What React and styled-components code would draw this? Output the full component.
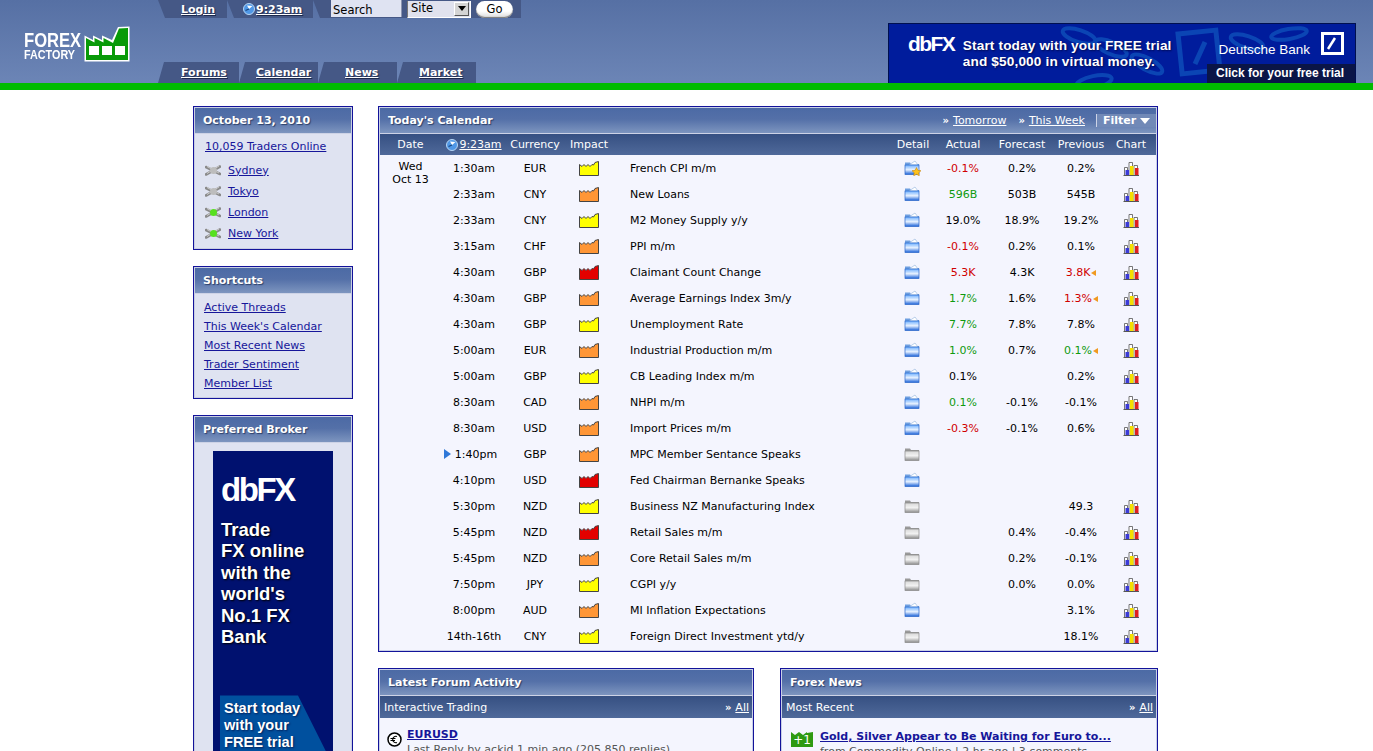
import React from "react"
import styled, { createGlobalStyle } from "styled-components"

const rows = [
  { time: "1:30am", cur: "EUR", impact: "low", event: "French CPI m/m", detail: "star", actual: "-0.1%", actualTone: "bad", forecast: "0.2%", previous: "0.2%", chart: true },
  { time: "2:33am", cur: "CNY", impact: "med", event: "New Loans", detail: "blue", actual: "596B", actualTone: "good", forecast: "503B", previous: "545B", chart: true },
  { time: "2:33am", cur: "CNY", impact: "low", event: "M2 Money Supply y/y", detail: "blue", actual: "19.0%", forecast: "18.9%", previous: "19.2%", chart: true },
  { time: "3:15am", cur: "CHF", impact: "med", event: "PPI m/m", detail: "blue", actual: "-0.1%", actualTone: "bad", forecast: "0.2%", previous: "0.1%", chart: true },
  { time: "4:30am", cur: "GBP", impact: "high", event: "Claimant Count Change", detail: "blue", actual: "5.3K", actualTone: "bad", forecast: "4.3K", previous: "3.8K", previousTone: "bad", revised: true, chart: true },
  { time: "4:30am", cur: "GBP", impact: "med", event: "Average Earnings Index 3m/y", detail: "blue", actual: "1.7%", actualTone: "good", forecast: "1.6%", previous: "1.3%", previousTone: "bad", revised: true, chart: true },
  { time: "4:30am", cur: "GBP", impact: "low", event: "Unemployment Rate", detail: "blue", actual: "7.7%", actualTone: "good", forecast: "7.8%", previous: "7.8%", chart: true },
  { time: "5:00am", cur: "EUR", impact: "med", event: "Industrial Production m/m", detail: "blue", actual: "1.0%", actualTone: "good", forecast: "0.7%", previous: "0.1%", previousTone: "good", revised: true, chart: true },
  { time: "5:00am", cur: "GBP", impact: "low", event: "CB Leading Index m/m", detail: "blue", actual: "0.1%", forecast: "", previous: "0.2%", chart: true },
  { time: "8:30am", cur: "CAD", impact: "med", event: "NHPI m/m", detail: "blue", actual: "0.1%", actualTone: "good", forecast: "-0.1%", previous: "-0.1%", chart: true },
  { time: "8:30am", cur: "USD", impact: "med", event: "Import Prices m/m", detail: "blue", actual: "-0.3%", actualTone: "bad", forecast: "-0.1%", previous: "0.6%", chart: true },
  { time: "1:40pm", cur: "GBP", impact: "med", event: "MPC Member Sentance Speaks", detail: "grey", next: true },
  { time: "4:10pm", cur: "USD", impact: "high", event: "Fed Chairman Bernanke Speaks", detail: "blue" },
  { time: "5:30pm", cur: "NZD", impact: "low", event: "Business NZ Manufacturing Index", detail: "grey", previous: "49.3", chart: true },
  { time: "5:45pm", cur: "NZD", impact: "high", event: "Retail Sales m/m", detail: "grey", forecast: "0.4%", previous: "-0.4%", chart: true },
  { time: "5:45pm", cur: "NZD", impact: "med", event: "Core Retail Sales m/m", detail: "grey", forecast: "0.2%", previous: "-0.1%", chart: true },
  { time: "7:50pm", cur: "JPY", impact: "low", event: "CGPI y/y", detail: "grey", forecast: "0.0%", previous: "0.0%", chart: true },
  { time: "8:00pm", cur: "AUD", impact: "med", event: "MI Inflation Expectations", detail: "blue", previous: "3.1%", chart: true },
  { time: "14th-16th", cur: "CNY", impact: "low", event: "Foreign Direct Investment ytd/y", detail: "grey", previous: "18.1%", chart: true },
]

const sessions = [
  { name: "Sydney", open: false },
  { name: "Tokyo", open: false },
  { name: "London", open: true },
  { name: "New York", open: true },
]

const shortcuts = ["Active Threads", "This Week's Calendar", "Most Recent News", "Trader Sentiment", "Member List"]

const impactColors = { low: "#ffff00", med: "#ff9636", high: "#e30000" }
const toneColors = { bad: "#d00000", good: "#0f9a0f" }

const GlobalStyle = createGlobalStyle`
  html, body {
    margin: 0;
    height: 100%;
    overflow: hidden;
    background: #fff;
  }
  body {
    font-family: "DejaVu Sans", Verdana, sans-serif;
    font-size: 11px;
    color: #000;
  }
`

const Header = styled.header`
  display: flex;
  height: 83px;
  background: linear-gradient(#5670a4, #6c85b6);
  border-bottom: 7px solid #00bb00;
`

const LogoCol = styled.div`
  width: 158px;
  flex: none;
  box-sizing: border-box;
  padding: 26px 0 0 24px;
`

const Logo = styled.div`
  display: flex;
  gap: 2px;
  align-items: flex-end;
`

const LogoWords = styled.div`
  width: 58px;
  color: #fff;
  font-family: "Liberation Sans", Arial, sans-serif;
  font-weight: bold;
  margin-bottom: 1px;
`

const LogoLine = styled.div`
  font-size: ${(p) => p.$size}px;
  line-height: ${(p) => p.$height}px;
  white-space: nowrap;
  transform: scaleX(${(p) => p.$stretch});
  transform-origin: left center;
`

const NavCol = styled.div`
  flex: 1;
  display: flex;
  flex-direction: column;
  justify-content: space-between;
`

const TopBar = styled.div`
  display: flex;
  height: 18px;
  width: 363px;
`

const TopTab = styled.div`
  width: ${(p) => p.$width}px;
  flex: none;
  display: flex;
  align-items: center;
  box-sizing: border-box;
  padding-left: ${(p) => p.$pad}px;
  gap: ${(p) => p.$gap || 0}px;
  background: #455886;
  clip-path: polygon(0 0, 100% 0, 100% 100%, 7px 100%);
`

const TabLink = styled.a`
  color: #fff;
  font-weight: bold;
  text-decoration: underline;
  text-shadow: 1px 1px 1px #1d2a4d;
`

const SearchInput = styled.input`
  width: 71px;
  height: 17px;
  box-sizing: border-box;
  margin: 0 5px 1px 0;
  padding: 2px 0 0 2px;
  border: 0;
  border-right: 1px solid #8b94b0;
  background: #dfe3f2;
  font: 11.5px "DejaVu Sans", sans-serif;
  color: #000;
  outline: none;
`

const FakeSelect = styled.div`
  width: 64px;
  height: 17px;
  box-sizing: border-box;
  margin-right: 5px;
  display: flex;
  justify-content: space-between;
  padding: 0 0 0 3px;
  background: #e0e2ee;
  border-right: 1px solid #fff;
  border-bottom: 1px solid #fff;
  border-left: 1px solid #777;
  font-size: 11.5px;
  line-height: 15px;
`

const SelectArrow = styled.span`
  width: 15px;
  height: 14px;
  margin: 1px 1px 0 0;
  background: #d4d4d4;
  border: 1px solid;
  border-color: #fff #555 #555 #fff;
  box-sizing: border-box;
  display: flex;
  align-items: center;
  justify-content: center;

  &::after {
    content: "";
    border: 4px solid transparent;
    border-top: 5px solid #000;
    border-bottom: 0;
  }
`

const GoButton = styled.button`
  width: 37px;
  height: 17px;
  padding: 0;
  border: 0;
  border-radius: 9px;
  background: linear-gradient(#fff 60%, #d8d8d8);
  box-shadow: inset 0 -1px 1px #777;
  font: 11.5px "DejaVu Sans", sans-serif;
  color: #000;
`

const BottomBar = styled.nav`
  display: flex;
  height: 21px;
  width: 318px;
`

const BottomTab = styled.div`
  width: ${(p) => p.$width}px;
  flex: none;
  box-sizing: border-box;
  padding-left: ${(p) => p.$pad}px;
  line-height: 22px;
  background: #455886;
  clip-path: polygon(6px 0, 100% 0, 100% 100%, 0 100%);
`

const TopBanner = styled.a`
  position: relative;
  align-self: flex-end;
  flex: none;
  width: 468px;
  height: 60px;
  margin-right: 17px;
  box-sizing: border-box;
  overflow: hidden;
  display: flex;
  background: #001c9c;
  border: 1px solid #00104f;
  border-bottom: 0;
  color: #fff;
  font-family: "Liberation Sans", Arial, sans-serif;
`

const BannerArt = styled.svg`
  position: absolute;
  inset: 0;
`

const BannerLogo = styled.div`
  position: relative;
  width: 74px;
  padding: 9px 0 0 19px;
  box-sizing: border-box;
  font-size: 21px;
  font-weight: bold;
  line-height: 22px;
  letter-spacing: -1.6px;
`

const BannerPitch = styled.div`
  position: relative;
  width: 245px;
  padding-top: 14px;
  font-size: 13.6px;
  font-weight: bold;
  line-height: 16px;
  letter-spacing: 0.15px;
  text-shadow: 1px 1px 2px #000a50;
`

const BannerBrand = styled.div`
  position: relative;
  flex: 1;
  display: flex;
  flex-direction: column;
  justify-content: space-between;
`

const BrandRow = styled.div`
  display: flex;
  align-items: flex-start;
  justify-content: flex-end;
  gap: 11px;
  padding: 8px 11px 0 0;
  font-size: 13.5px;
`

const BrandName = styled.span`
  margin-top: 10px;
`

const BrandCta = styled.div`
  width: 148px;
  align-self: flex-end;
  height: 19px;
  box-sizing: border-box;
  padding-left: 9px;
  background: #0a1547;
  font-size: 12px;
  font-weight: bold;
  line-height: 19px;
  white-space: nowrap;
`

const Page = styled.main`
  display: grid;
  grid-template-columns: 160px 780px;
  column-gap: 25px;
  margin: 16px 0 0 193px;
  align-items: start;
`

const Sidebar = styled.aside`
  display: flex;
  flex-direction: column;
  gap: 16px;
`

const Content = styled.section`
  display: flex;
  flex-direction: column;
  gap: 16px;
`

const Box = styled.div`
  border: 1px solid #13139a;
  padding: 1px;
  background: ${(p) => (p.$side ? "#c9cee2" : "#c9d0e6")};
`

const TitleBar = styled.div`
  display: flex;
  align-items: stretch;
  justify-content: space-between;
  height: 25px;
  border-bottom: 1px solid #cdd3e6;
  background: linear-gradient(#4c6aa5, #5470a8 45%, #7d95bf);
`

const TitleText = styled.h3`
  margin: 0;
  padding-left: ${(p) => p.$pad || 8}px;
  color: #fff;
  font-size: 11px;
  font-weight: bold;
  line-height: 25px;
  text-shadow: 1px 1px 1px #2c3f68;
`

const TitleLinks = styled.div`
  display: flex;
  align-items: center;
  color: #fff;
`

const Quote = styled.span`
  margin: 0 ${(p) => p.$gap || 0}px 0 ${(p) => p.$left || 0}px;
  font-weight: bold;
  font-size: 10px;
`

const LightLink = styled.a`
  color: #fff;
  text-decoration: underline;
`

const FilterTab = styled.div`
  width: 60px;
  margin-left: 11px;
  display: flex;
  align-items: center;
  justify-content: center;
  gap: 4px;
  box-sizing: border-box;
  border-left: 1px solid #cdd3e6;
  background: #7189b7;
  color: #fff;
  font-weight: bold;

  &::after {
    content: "";
    border: 5px solid transparent;
    border-top: 6px solid #fff;
    border-bottom: 0;
  }
`

const SideBody = styled.div`
  background: #dfe3f1;
  padding: ${(p) => p.$pad};
`

const NavyLink = styled.a`
  color: #16169a;
  text-decoration: underline;
  line-height: ${(p) => p.$line || 14}px;
  display: block;
  white-space: nowrap;
`

const SessionList = styled.ul`
  list-style: none;
  margin: 6px 0 0;
  padding: 0;
`

const SessionItem = styled.li`
  display: flex;
  align-items: center;
  height: 21px;
  gap: 7px;
`

const BrokerAd = styled.a`
  display: block;
  width: 120px;
  height: 320px;
  margin: 0 auto;
  box-sizing: border-box;
  padding: 20px 8px 0;
  overflow: hidden;
  background: #00116f;
  color: #fff;
  font-family: "Liberation Sans", Arial, sans-serif;
  font-weight: bold;
`

const BrokerLogo = styled.div`
  font-size: 33px;
  line-height: 38px;
  letter-spacing: -2.4px;
`

const BrokerPitch = styled.div`
  margin-top: 10px;
  font-size: 18.5px;
  line-height: 21.4px;
  text-shadow: 1px 1px 2px #000;
  white-space: pre-line;
`

const BrokerCta = styled.div`
  width: 113px;
  height: 120px;
  margin: 48px 0 0 -1px;
  box-sizing: border-box;
  padding: 5px 0 0 4px;
  background: #00509e;
  clip-path: polygon(0 0, 78px 0, 100% 70px, 100% 100%, 0 100%);
  font-size: 14.6px;
  line-height: 17px;
  text-shadow: 1px 1px 2px #00205a;
`

const columns = "61px 66px 56px 52px 273px 50px 50px 68px 50px 50px"

const SubHead = styled.div`
  display: grid;
  grid-template-columns: ${columns};
  height: 21px;
  align-items: center;
  text-align: center;
  color: #fff;
  background: linear-gradient(#365082, #4f699a);
`

const ClockCell = styled.span`
  display: flex;
  align-items: center;
  justify-content: center;
  gap: 1px;
`

const CalBody = styled.div`
  background: #f4f5fe;
  padding-bottom: 1px;
`

const Row = styled.div`
  display: grid;
  grid-template-columns: ${columns};
  height: 26px;
  align-items: center;
  text-align: center;
`

const DateCell = styled.div`
  align-self: start;
  height: 26px;
  padding-top: 5px;
  box-sizing: border-box;
  line-height: 13px;
  white-space: nowrap;
`

const TimeCell = styled.div`
  white-space: nowrap;
`

const NextArrow = styled.span`
  display: inline-block;
  margin: 0 4px 0 -7px;
  border: 5px solid transparent;
  border-left: 7px solid #2f78d8;
  border-right: 0;
  vertical-align: -1px;
`

const IconCell = styled.div`
  display: flex;
  justify-content: center;
`

const EventCell = styled.div`
  text-align: left;
  padding-left: 15px;
  white-space: nowrap;
`

const Value = styled.div`
  position: relative;
  color: ${(p) => toneColors[p.$tone] || "#000"};
  white-space: nowrap;
`

const Revised = styled.span`
  display: inline-block;
  margin-left: 1px;
  border: 3px solid transparent;
  border-right: 5px solid #f09a20;
  border-left: 0;
  vertical-align: 0;
`

const LowerGrid = styled.div`
  display: grid;
  grid-template-columns: 376px 378px;
  column-gap: 26px;
`

const Listing = styled.div`
  display: flex;
  gap: ${(p) => p.$gap}px;
  background: #f4f5fe;
  padding: 10px 0 60px ${(p) => p.$pad}px;
`

const ListTitle = styled.a`
  display: block;
  color: #16169a;
  font-weight: bold;
  font-size: ${(p) => p.$size || 11}px;
  line-height: 14px;
  text-decoration: underline;
  white-space: nowrap;
  margin-top: ${(p) => p.$top || 0}px;
`

const ListMeta = styled.div`
  margin-top: 1px;
  color: #555;
  line-height: 14px;
  white-space: nowrap;
`

const BarLabel = styled.span`
  padding-left: ${(p) => p.$pad}px;
`

const ListBar = styled.div`
  display: flex;
  align-items: center;
  justify-content: space-between;
  height: 22px;
  padding-right: 3px;
  color: #fff;
  background: linear-gradient(#365082, #4f699a);
`

const LogoMark = () => (
  <svg width="46" height="36" viewBox="0 0 46 36">
    <path d="M.5 9.5 L9 14 L9 9.5 L18 14 L18 9.5 L28 14 L34 1 L45.5 .5 L45.5 35.5 L.5 35.5Z" fill="#fff" />
    <path d="M2 12 L10.500 16.500 L10.500 12 L19.500 16.500 L19.500 12 L29 17 L35 2.500 L44 2 L44 34 L2 34Z" fill="#089a08" />
    <rect x="5" y="20" width="10" height="9" fill="#fff" />
    <rect x="18" y="20" width="10" height="9" fill="#fff" />
    <rect x="31" y="20" width="10" height="9" fill="#fff" />
  </svg>
)

const ClockIcon = () => (
  <svg width="12" height="12" viewBox="0 0 12 12">
    <circle cx="6" cy="6" r="5.500" fill="#4f97e6" stroke="#b7d6f5" />
    <path d="M6 6 L9.500 3 L4 2.500Z" fill="#fff" />
    <path d="M6 6 L2.500 7.500" stroke="#17457f" strokeWidth="1.200" />
  </svg>
)

const ImpactIcon = ({ level }) => (
  <svg width="20" height="15" viewBox="0 0 20 15">
    <path
      d="M.5 14.500 V3.500 L3 5.500 L5 3.500 L7 5.500 L9 3.500 L11 5.500 L13 3.500 L14.500 4 L16 1.500 L19.500 .5 V14.500Z"
      fill={impactColors[level]}
      stroke="#444"
    />
  </svg>
)

const FolderIcon = ({ kind }) => {
  const grey = kind === "grey"
  const id = grey ? "folderGrey" : "folderBlue"
  return (
    <svg width="18" height="16" viewBox="0 0 18 16">
      <defs>
        <linearGradient id={id} x1="0" y1="0" x2="0" y2="1">
          <stop offset="0" stopColor={grey ? "#d8d8d8" : "#6fb0ff"} />
          <stop offset="0.5" stopColor={grey ? "#f2f2f2" : "#e8f2ff"} />
          <stop offset="1" stopColor={grey ? "#8b8b8b" : "#1860d8"} />
        </linearGradient>
      </defs>
      <path d="M1 2.500 H6 L7 4 H15 V6 H1Z" fill={grey ? "#9a9a9a" : "#6e9fe0"} />
      {!grey && <path d="M5 5 L11 1 L14 5Z" fill="#fff" stroke="#8fb2dc" strokeWidth="0.600" />}
      <rect x="1" y="5" width="14" height="9.500" fill={`url(#${id})`} stroke={grey ? "#888" : "#2a66c8"} strokeWidth="0.700" />
      {kind === "star" && (
        <path d="M12.500 7.500 L13.900 10.300 L17 10.700 L14.700 12.800 L15.300 15.800 L12.500 14.300 L9.700 15.800 L10.300 12.800 L8 10.700 L11.100 10.300Z" fill="#ffc21a" stroke="#c17a00" strokeWidth="0.500" />
      )}
    </svg>
  )
}

const ChartIcon = () => (
  <svg width="17" height="15" viewBox="0 0 17 15">
    <path d="M.5 14.500 H16" stroke="#555" />
    <path d="M1.500 14 V6.500 H4.500 V14M6 14 V1.500 H9.500 V14M11 14 V4.500 H14.500 V14" fill="#fff" stroke="#555" strokeWidth="0.800" />
    <rect x="2.500" y="9" width="3.500" height="5" fill="#3b3bd8" />
    <rect x="7" y="5" width="3.500" height="9" fill="#f5e000" />
    <rect x="12" y="7" width="3.500" height="7" fill="#e02020" />
  </svg>
)

const SessionIcon = ({ open }) => (
  <svg width="16" height="13" viewBox="0 0 16 13">
    <path d="M1 3 L15 10M15 2.500 L1 10.500" stroke="#8a8a8a" strokeWidth="2.600" strokeLinecap="round" />
    <path d="M2 2.500 L14 9M14 2 L2 9.500" stroke="#d4d4d4" strokeWidth="0.900" />
    <circle cx="8.500" cy="6.500" r="3.500" fill={open ? "#57e020" : "#bdbdbd"} />
  </svg>
)

const EuroIcon = () => (
  <svg width="15" height="15" viewBox="0 0 15 15">
    <circle cx="7.500" cy="7.500" r="6.500" fill="#fff" stroke="#000" strokeWidth="1.500" />
    <path d="M10 4.500 A3.200 3.200 0 1 0 10 10.500M3.500 6.500 H8.500M3.500 8.500 H8" fill="none" stroke="#000" strokeWidth="1.100" />
  </svg>
)

const PlusBadge = styled.div`
  width: 22px;
  height: 15px;
  flex: none;
  margin-top: 4px;
  background: #2e9a12;
  clip-path: polygon(0 0, 4px 3px, 8px 0, 12px 3px, 16px 0, 16px 1px, 22px 0, 100% 100%, 0 100%);
  color: #fff;
  font-size: 12px;
  line-height: 17px;
  text-align: center;
`

const EuroWrap = styled.div`
  flex: none;
  margin-top: 4px;
`

const BannerChains = () => (
  <BannerArt width="468" height="60" viewBox="0 0 468 60">
    <g fill="none" stroke="#0b45b4">
      <rect x="291" y="8" width="38" height="40" strokeWidth="5" transform="rotate(-6 310 28)" />
      <path d="M306 40 L316 18" strokeWidth="5" />
      <g strokeWidth="4">
        <ellipse cx="190" cy="12" rx="17" ry="6" transform="rotate(18 190 12)" />
        <ellipse cx="222" cy="24" rx="17" ry="6" transform="rotate(24 222 24)" />
        <ellipse cx="258" cy="40" rx="17" ry="6" transform="rotate(28 258 40)" />
        <ellipse cx="205" cy="58" rx="18" ry="6" transform="rotate(-12 205 58)" />
        <ellipse cx="358" cy="18" rx="17" ry="6" transform="rotate(18 358 18)" />
        <ellipse cx="400" cy="10" rx="18" ry="5" transform="rotate(-10 400 10)" />
      </g>
    </g>
  </BannerArt>
)

const BankMark = () => (
  <svg width="23" height="23" viewBox="0 0 23 23">
    <rect x="1.500" y="1.500" width="20" height="20" fill="none" stroke="#fff" strokeWidth="3" />
    <path d="M7 17 L14 6" stroke="#fff" strokeWidth="2.500" />
  </svg>
)

const App = () => (
  <>
    <GlobalStyle />
    <Header>
      <LogoCol>
        <Logo>
          <LogoWords>
            <LogoLine $size={20} $height={17} $stretch={0.83}>FOREX</LogoLine>
            <LogoLine $size={13.500} $height={12} $stretch={0.8}>FACTORY</LogoLine>
          </LogoWords>
          <LogoMark />
        </Logo>
      </LogoCol>
      <NavCol>
        <TopBar>
          <TopTab $width={69} $pad={23}><TabLink>Login</TabLink></TopTab>
          <TopTab $width={86} $pad={16} $gap={1}><ClockIcon /><TabLink>9:23am</TabLink></TopTab>
          <TopTab $width={208} $pad={18}>
            <SearchInput defaultValue="Search" readOnly />
            <FakeSelect>Site<SelectArrow /></FakeSelect>
            <GoButton>Go</GoButton>
          </TopTab>
        </TopBar>
        <BottomBar>
          <BottomTab $width={81} $pad={23}><TabLink>Forums</TabLink></BottomTab>
          <BottomTab $width={79} $pad={17}><TabLink>Calendar</TabLink></BottomTab>
          <BottomTab $width={79} $pad={27}><TabLink>News</TabLink></BottomTab>
          <BottomTab $width={79} $pad={22}><TabLink>Market</TabLink></BottomTab>
        </BottomBar>
      </NavCol>
      <TopBanner>
        <BannerChains />
        <BannerLogo>dbFX</BannerLogo>
        <BannerPitch>
          Start today with your FREE trial
          <br />
          and $50,000 in virtual money.
        </BannerPitch>
        <BannerBrand>
          <BrandRow>
            <BrandName>Deutsche Bank</BrandName>
            <BankMark />
          </BrandRow>
          <BrandCta>Click for your free trial</BrandCta>
        </BannerBrand>
      </TopBanner>
    </Header>
    <Page>
      <Sidebar>
        <Box $side>
          <TitleBar><TitleText $pad={8}>October 13, 2010</TitleText></TitleBar>
          <SideBody $pad="6px 0 4px 10px">
            <NavyLink>10,059 Traders Online</NavyLink>
            <SessionList>
              {sessions.map((s) => (
                <SessionItem key={s.name}>
                  <SessionIcon open={s.open} />
                  <NavyLink>{s.name}</NavyLink>
                </SessionItem>
              ))}
            </SessionList>
          </SideBody>
        </Box>
        <Box $side>
          <TitleBar><TitleText $pad={8}>Shortcuts</TitleText></TitleBar>
          <SideBody $pad="4px 0 4px 9px">
            {shortcuts.map((s) => (
              <NavyLink key={s} $line={19}>{s}</NavyLink>
            ))}
          </SideBody>
        </Box>
        <Box $side>
          <TitleBar><TitleText $pad={8}>Preferred Broker</TitleText></TitleBar>
          <SideBody $pad="8px 0">
            <BrokerAd>
              <BrokerLogo>dbFX</BrokerLogo>
              <BrokerPitch>{"Trade\nFX  online\nwith the\nworld's\nNo.1 FX\nBank"}</BrokerPitch>
              <BrokerCta>Start today<br />with your<br />FREE trial<br />and $50,000</BrokerCta>
            </BrokerAd>
          </SideBody>
        </Box>
      </Sidebar>
      <Content>
        <Box>
          <TitleBar>
            <TitleText>Today's Calendar</TitleText>
            <TitleLinks>
              <Quote $gap={4}>»</Quote>
              <LightLink>Tomorrow</LightLink>
              <Quote $left={12} $gap={4}>»</Quote>
              <LightLink>This Week</LightLink>
              <FilterTab>Filter</FilterTab>
            </TitleLinks>
          </TitleBar>
          <SubHead>
            <span>Date</span>
            <ClockCell><ClockIcon /><LightLink>9:23am</LightLink></ClockCell>
            <span>Currency</span>
            <span>Impact</span>
            <span />
            <span>Detail</span>
            <span>Actual</span>
            <span>Forecast</span>
            <span>Previous</span>
            <span>Chart</span>
          </SubHead>
          <CalBody>
            {rows.map((r, i) => (
              <Row key={i}>
                <DateCell>{i === 0 && <>Wed<br />Oct 13</>}</DateCell>
                <TimeCell>{r.next && <NextArrow />}{r.time}</TimeCell>
                <div>{r.cur}</div>
                <IconCell><ImpactIcon level={r.impact} /></IconCell>
                <EventCell>{r.event}</EventCell>
                <IconCell><FolderIcon kind={r.detail} /></IconCell>
                <Value $tone={r.actualTone}>{r.actual}</Value>
                <Value>{r.forecast}</Value>
                <Value $tone={r.previousTone}>{r.previous}{r.revised && <Revised />}</Value>
                <IconCell>{r.chart && <ChartIcon />}</IconCell>
              </Row>
            ))}
          </CalBody>
        </Box>
        <LowerGrid>
          <Box>
            <TitleBar><TitleText>Latest Forum Activity</TitleText></TitleBar>
            <ListBar>
              <BarLabel $pad={4}>Interactive Trading</BarLabel>
              <span><Quote $gap={4}>»</Quote><LightLink>All</LightLink></span>
            </ListBar>
            <Listing $gap={5} $pad={7}>
              <EuroWrap><EuroIcon /></EuroWrap>
              <div>
                <ListTitle>EURUSD</ListTitle>
                <ListMeta>Last Reply by ackid 1 min ago (205,850 replies)</ListMeta>
              </div>
            </Listing>
          </Box>
          <Box>
            <TitleBar><TitleText>Forex News</TitleText></TitleBar>
            <ListBar>
              <BarLabel $pad={4}>Most Recent</BarLabel>
              <span><Quote $gap={4}>»</Quote><LightLink>All</LightLink></span>
            </ListBar>
            <Listing $gap={7} $pad={9}>
              <PlusBadge>+1</PlusBadge>
              <div>
                <ListTitle $top={2}>Gold, Silver Appear to Be Waiting for Euro to...</ListTitle>
                <ListMeta>from Commodity Online | 2 hr ago | 3 comments</ListMeta>
              </div>
            </Listing>
          </Box>
        </LowerGrid>
      </Content>
    </Page>
  </>
)

export default App
